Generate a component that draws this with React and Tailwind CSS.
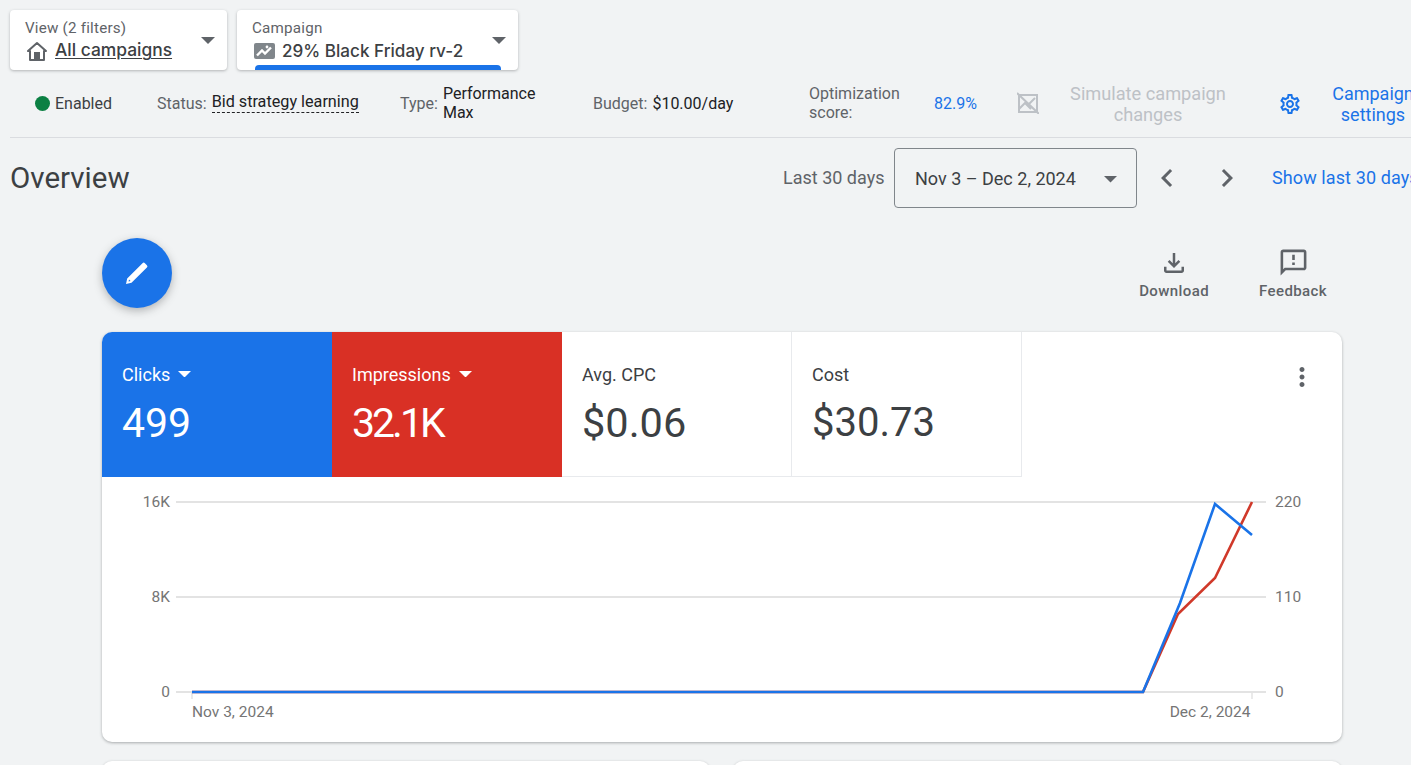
import React from "react";
import { MdMoreVert, MdOutlineSettings, MdChevronLeft, MdChevronRight } from "react-icons/md";

function Caret({ className }) {
  return <svg viewBox="0 0 14 7" className={className} fill="currentColor"><path d="M0 0h14L7 7z" /></svg>;
}

function Selector({ width, label, children, bar }) {
  return (
    <div className={`relative h-[60px] ${width} rounded-[4px] bg-white shadow-[0_1px_3px_rgba(60,64,67,0.35)] pl-[15px] pt-[9px] overflow-hidden`}>
      <div className="text-[15.2px] leading-[18px] text-[#5f6368] tracking-[0.2px]">{label}</div>
      <div className="flex items-center h-[25px] mt-[1px] text-[#3c4043] text-[17px]">{children}</div>
      <Caret className="absolute right-[12px] top-[27px] w-[14px] h-[7px] text-[#5f6368]" />
      {bar}
    </div>
  );
}

function Tile({ width, bg, label, value, caret, valueClass }) {
  return (
    <div className={`${width} h-[145px] pl-[20px] pt-[29px] ${bg}`}>
      <div className={`flex items-center gap-[8px] h-[26px] text-[18px] ${caret ? "text-white" : "text-[#3c4043]"}`}>
        {label}
        {caret && <Caret className="w-[13px] h-[6.5px] text-white" />}
      </div>
      <div className={`mt-[12px] leading-[48px] ${valueClass} ${caret ? "text-white" : "text-[#3c4043]"}`}>{value}</div>
    </div>
  );
}

function Chart() {
  const gx1 = 176, gx2 = 1266;
  return (
    <svg width="1240" height="265" viewBox="102 477 1240 265" className="block" style={{ fontFamily: "Roboto, sans-serif" }}>
      {[502, 597, 692].map((y) => (
        <line key={y} x1={gx1} x2={gx2} y1={y} y2={y} stroke="#e3e3e3" strokeWidth="2" />
      ))}
      <line x1="192" x2="192" y1="692" y2="699" stroke="#e3e3e3" strokeWidth="1.5" />
      <line x1="1252" x2="1252" y1="692" y2="699" stroke="#e3e3e3" strokeWidth="1.5" />
      <g fill="#757575" fontSize="15.5">
        <text x="170" y="507" textAnchor="end">16K</text>
        <text x="170" y="602" textAnchor="end">8K</text>
        <text x="170" y="697" textAnchor="end">0</text>
        <text x="1275" y="507">220</text>
        <text x="1275" y="602">110</text>
        <text x="1275" y="697">0</text>
      </g>
      <g fill="#757575" fontSize="15.5">
        <text x="192" y="717">Nov 3, 2024</text>
        <text x="1250.5" y="717" textAnchor="end">Dec 2, 2024</text>
      </g>
      <polyline points="192,692 1143,692 1178,614 1215,578 1252,502" fill="none" stroke="#d0392a" strokeWidth="2.6" />
      <polyline points="192,692 1143,692 1180,603 1215,504 1252,535" fill="none" stroke="#1a73e8" strokeWidth="2.6" />
    </svg>
  );
}

export default function App() {
  return (
    <div className="w-[1411px] h-[765px] overflow-hidden bg-[#f1f3f4] font-['Roboto',sans-serif]">
      <div className="flex gap-[10px] pl-[10px] pt-[10px]">
        <Selector width="w-[217px]" label="View (2 filters)">
          <svg viewBox="0 0 20 20" className="w-[20px] h-[20px] ml-[2px] mr-[8px] text-[#5f6368]">
            <path d="M10 2L1 10v0h2v9h14v-9h2z" fill="none" stroke="currentColor" strokeWidth="2" strokeLinejoin="round" />
            <rect x="7" y="11" width="6" height="8" fill="currentColor" />
          </svg>
          <span className="underline underline-offset-2 font-['Inter',sans-serif] text-[17.4px] font-medium">All campaigns</span>
        </Selector>
        <Selector
          width="w-[281px]"
          label="Campaign"
          bar={<div className="absolute left-[18px] bottom-0 w-[246px] h-[5px] rounded-t-[4px] bg-[#1a73e8]" />}
        >
          <svg viewBox="0 0 21 16" className="w-[21px] h-[16px] ml-[2px] mr-[7px]">
            <rect x="0" y="0" width="21" height="16" rx="2" fill="#80868b" />
            <path d="M3 12.5l5-5 3 3 6-6" fill="none" stroke="#fff" strokeWidth="2.4" />
            <circle cx="13" cy="4" r="1.4" fill="#fff" />
          </svg>
          <span className="font-['Inter',sans-serif] text-[17.1px] font-medium">29% Black Friday rv-2</span>
        </Selector>
      </div>

      <div className="ml-[10px] h-[68px] border-b border-[#dadce0] flex items-center text-[16px] text-[#5f6368] whitespace-nowrap">
        <div className="w-[147px] shrink-0 pl-[25px] flex items-center gap-[5px]">
          <span className="w-[15px] h-[15px] rounded-full bg-[#0b8043]" />
          <span className="text-[#3c4043]">Enabled</span>
        </div>
        <div className="w-[243px] shrink-0 flex items-center gap-[5px]">
          <span>Status:</span>
          <span className="text-[#202124] text-[16.2px] leading-[20px] border-b-[1.5px] border-dashed border-[#202124] -mt-[2px]">Bid strategy learning</span>
        </div>
        <div className="w-[193px] shrink-0 flex items-center gap-[5px]">
          <span>Type:</span>
          <span className="text-[#202124] leading-[19px] whitespace-normal w-[110px] pb-[2px]">Performance Max</span>
        </div>
        <div className="w-[216px] shrink-0 flex items-center gap-[5px]">
          <span>Budget:</span>
          <span className="text-[#202124]">$10.00/day</span>
        </div>
        <div className="w-[125px] shrink-0 leading-[19px] whitespace-normal pb-[2px]">Optimization score:</div>
        <div className="w-[84px] shrink-0 text-[#1a73e8]">82.9%</div>
        <svg viewBox="0 0 22 22" className="w-[22px] h-[22px] shrink-0 -ml-[1px] mr-[1px] mb-[2px] text-[#bdc1c6]" fill="none" stroke="currentColor" strokeWidth="2">
          <path d="M2 3h18v17H2z" />
          <path d="M2 17l6-6 6 6M12 12l6-6M0 1l22 21" />
        </svg>
        <div className="w-[216px] shrink-0 text-center text-[18.2px] leading-[21px] whitespace-normal text-[#bdc1c6] px-[28px]">Simulate campaign changes</div>
        <MdOutlineSettings className="w-[24px] h-[24px] shrink-0 ml-[22px] text-[#1a73e8]" />
        <div className="w-[100px] ml-[21px] shrink-0 text-center text-[18px] leading-[21px] text-[#1a73e8]">Campaign<br />settings</div>
      </div>

      <div className="flex items-center h-[80px] ml-[10px] whitespace-nowrap">
        <h1 className="text-[29.5px] shrink-0 text-[#3c4043] font-normal w-[773px]">Overview</h1>
        <span className="w-[111px] shrink-0 text-[18px] text-[#5f6368] pb-[2px]">Last 30 days</span>
        <div className="w-[243px] shrink-0 h-[60px] rounded-[4px] border border-[#80868b] flex items-center pl-[20px] text-[18px] text-[#3c4043] relative">
          Nov 3 – Dec 2, 2024
          <Caret className="absolute right-[19px] top-[27px] w-[13px] h-[6.5px] text-[#5f6368]" />
        </div>
        <MdChevronLeft className="w-[36px] h-[36px] shrink-0 ml-[12px] text-[#5f6368]" />
        <MdChevronRight className="w-[36px] h-[36px] shrink-0 ml-[24px] text-[#5f6368]" />
        <span className="ml-[27px] shrink-0 text-[18px] tracking-[0.1px] text-[#1a73e8] pb-[2px]">Show last 30 days</span>
      </div>

      <div className="ml-[102px] w-[1240px]">
        <div className="flex items-start justify-between mt-[20px] h-[94px]">
          <div className="w-[70px] h-[70px] rounded-full bg-[#1a73e8] shadow-[0_3px_8px_rgba(60,64,67,0.35)] flex items-center justify-center">
            <svg viewBox="0 0 24 24" className="w-[24px] h-[24px] text-white">
              <path fillRule="evenodd" fill="currentColor" d="M1 23l1.2-5.5L17.5 2.2q1.2-1.2 2.4 0l2 2q1.2 1.2 0 2.4L6.5 21.8zM3.6 20.4l2-.5-1.6-1.5z" />
            </svg>
          </div>
          <div className="flex gap-[50px] pt-[13px] pr-[15px] text-[15px] font-medium text-[#5f6368] tracking-[0.4px]">
            <div className="flex flex-col items-center">
              <svg viewBox="0 0 24 24" className="w-[30px] h-[30px] -mt-[3px]" fill="currentColor">
                <path d="M18 15v3H6v-3H4v3c0 1.1.9 2 2 2h12c1.1 0 2-.9 2-2v-3h-2zm-1-4-1.41-1.41L13 12.17V4h-2v8.17L8.41 9.59 7 11l5 5 5-5z" />
              </svg>
              <span className="mt-[2px]">Download</span>
            </div>
            <div className="flex flex-col items-center">
              <svg viewBox="0 0 24 24" className="w-[31px] h-[31px] -mt-[4px]" fill="currentColor">
                <path d="M20 2H4c-1.1 0-1.99.9-1.99 2L2 22l4-4h14c1.1 0 2-.9 2-2V4c0-1.1-.9-2-2-2zm0 14H5.17L4 17.17V4h16v12zM11 12h2v2h-2zm0-6h2v4h-2z" />
              </svg>
              <span className="mt-[2px]">Feedback</span>
            </div>
          </div>
        </div>

        <div className="relative h-[410px] rounded-[10px] bg-white shadow-[0_1px_3px_rgba(60,64,67,0.4)] overflow-hidden">
          <div className="flex">
            <Tile width="w-[230px]" bg="bg-[#1a73e8]" label="Clicks" value="499" valueClass="text-[41px]" caret />
            <Tile width="w-[230px]" bg="bg-[#d93025]" label="Impressions" value="32.1K" valueClass="text-[41px] tracking-[-3px]" caret />
            <Tile width="w-[230px] border-b border-r border-[#e8eaed]" bg="bg-white" label="Avg. CPC" value="$0.06" valueClass="text-[41.5px]" />
            <Tile width="w-[230px] border-b border-r border-[#e8eaed]" bg="bg-white" label="Cost" value="$30.73" valueClass="text-[40px]" />
          </div>
          <MdMoreVert className="absolute right-[25px] top-[30px] w-[30px] h-[30px] text-[#5f6368]" />
          <Chart />
        </div>

        <div className="flex gap-[23px] mt-[19px]">
          <div className="w-[608px] h-[40px] rounded-[10px] bg-white shadow-[0_1px_3px_rgba(60,64,67,0.4)]" />
          <div className="w-[609px] h-[40px] rounded-[10px] bg-white shadow-[0_1px_3px_rgba(60,64,67,0.4)]" />
        </div>
      </div>
    </div>
  );
}
